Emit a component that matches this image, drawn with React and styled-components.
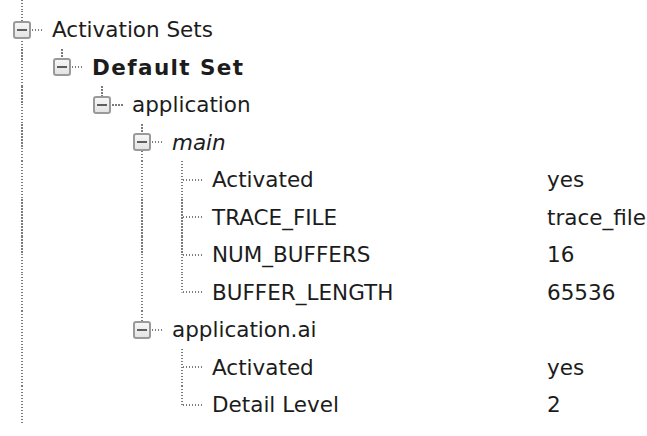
import React from 'react'
import styled, {createGlobalStyle, css} from 'styled-components'

const GlobalStyle = createGlobalStyle`
  html, body {
    margin: 0;
    padding: 0;
    background: #ffffff;
  }
  body {
    font-family: "DejaVu Sans", "Liberation Sans", sans-serif;
    color: #1c1c1c;
  }
`

const DOT = '#7c7c7c'
const vDots = `repeating-linear-gradient(to bottom, ${DOT} 0 1.5px, transparent 1.5px 3px)`
const hDots = `repeating-linear-gradient(to right, ${DOT} 0 1.5px, transparent 1.5px 3px)`

const tree = [
  {
    label: 'Activation Sets',
    more: true,
    children: [
      {
        label: 'Default Set',
        bold: true,
        children: [
          {
            label: 'application',
            children: [
              {
                label: 'main',
                italic: true,
                children: [
                  {label: 'Activated', value: 'yes'},
                  {label: 'TRACE_FILE', value: 'trace_file'},
                  {label: 'NUM_BUFFERS', value: '16'},
                  {label: 'BUFFER_LENGTH', value: '65536'},
                ],
              },
              {
                label: 'application.ai',
                children: [
                  {label: 'Activated', value: 'yes'},
                  {label: 'Detail Level', value: '2'},
                ],
              },
            ],
          },
        ],
      },
    ],
  },
]

const flatten = (nodes, guides = [], out = []) => {
  nodes.forEach((node, i) => {
    const hasNext = node.more || i < nodes.length - 1
    out.push({...node, guides, hasNext})
    if (node.children) flatten(node.children, [...guides, hasNext], out)
  })
  return out
}

const rows = flatten(tree)

const App = () => (
  <>
    <GlobalStyle />
    <Tree>
      <TopGap>
        <Guide $line />
      </TopGap>
      {rows.map((row, i) => (
        <Row key={i}>
          <Branch>
            {row.guides.map((g, j) => (
              <Guide key={j} $line={g} />
            ))}
            <Connector $hasNext={row.hasNext}>
              {row.children && (
                <Handle>
                  <Minus />
                </Handle>
              )}
            </Connector>
            <Label $bold={row.bold} $italic={row.italic}>
              {row.label}
            </Label>
          </Branch>
          {row.value && <Value>{row.value}</Value>}
        </Row>
      ))}
    </Tree>
  </>
)

export default App

const Tree = styled.div`
  display: flex;
  flex-direction: column;
  padding-left: 2px;
  width: 647px;
  height: 436px;
  overflow: hidden;
  box-sizing: border-box;
`

const TopGap = styled.div`
  display: flex;
  height: 11px;
  flex: none;
`

const Row = styled.div`
  display: flex;
  align-items: stretch;
  height: 37.5px;
  flex: none;
`

const Branch = styled.div`
  display: flex;
  align-items: stretch;
  width: 545px;
  flex: none;
`

const Guide = styled.div`
  width: 40px;
  flex: none;
  ${p =>
    p.$line &&
    css`
      background: ${vDots} 19px 0 / 2px 100% no-repeat;
    `}
`

const Connector = styled.div`
  width: 50px;
  flex: none;
  display: flex;
  align-items: center;
  background:
    ${vDots} 19px 0 / 2px ${p => (p.$hasNext ? '100%' : '50%')} no-repeat,
    ${hDots} 21px 50% / 20px 2px no-repeat;
`

const Handle = styled.div`
  width: 18px;
  height: 18px;
  margin-left: 11px;
  box-sizing: border-box;
  border: 2px solid #9a9a9a;
  border-radius: 3px;
  background: linear-gradient(#f6f6f6, #e4e4e4);
  display: flex;
  align-items: center;
  justify-content: center;
`

const Minus = styled.div`
  width: 10px;
  height: 2px;
  background: #5e5e5e;
`

const Label = styled.div`
  display: flex;
  align-items: center;
  font-size: 21.5px;
  white-space: nowrap;
  font-weight: ${p => (p.$bold ? 700 : 400)};
  font-style: ${p => (p.$italic ? 'italic' : 'normal')};
  letter-spacing: ${p => (p.$bold ? '1.4px' : '0')};
`

const Value = styled.div`
  display: flex;
  align-items: center;
  font-size: 21.5px;
  white-space: nowrap;
`
